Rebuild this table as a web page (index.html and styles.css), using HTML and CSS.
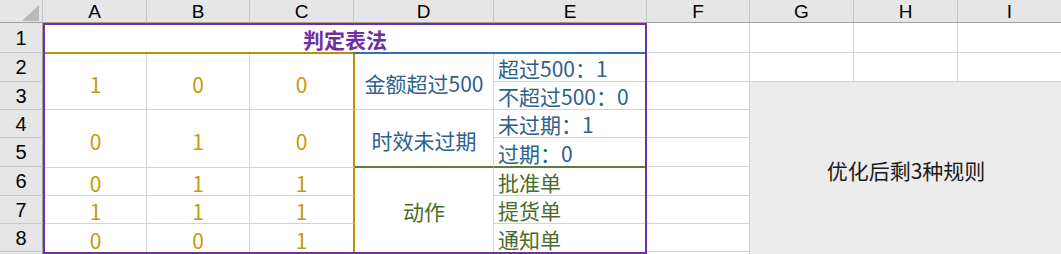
FILE: index.html
```html
<!DOCTYPE html>
<html lang="zh-CN">
<head>
<meta charset="utf-8">
<title>判定表法</title>
<link rel="stylesheet" href="styles.css">
</head>
<body>
<div class="sheet">
  <div class="corner"><svg width="43" height="23" viewBox="0 0 43 23"><polygon points="39,5 39,21 22,21" fill="#b9b9b9"/></svg></div>
  <div class="colh">A</div>
  <div class="colh">B</div>
  <div class="colh">C</div>
  <div class="colh">D</div>
  <div class="colh">E</div>
  <div class="colh">F</div>
  <div class="colh">G</div>
  <div class="colh">H</div>
  <div class="colh">I</div>

  <div class="rowh r1">1</div>
  <div class="rowh r2">2</div>
  <div class="rowh r3">3</div>
  <div class="rowh r4">4</div>
  <div class="rowh r5">5</div>
  <div class="rowh r6">6</div>
  <div class="rowh r7">7</div>
  <div class="rowh r8">8</div>
  <div class="rowh r9"></div>

  <div class="table">
    <div class="title">判定表法</div>

    <div class="cell num m2">1</div>
    <div class="cell num m2">0</div>
    <div class="cell num m2 gold">0</div>
    <div class="cell cond m2">金额超过500</div>
    <div class="cell val">超过500：1</div>
    <div class="cell val">不超过500：0</div>

    <div class="cell num m2">0</div>
    <div class="cell num m2">1</div>
    <div class="cell num m2 gold">0</div>
    <div class="cell cond m2 green">时效未过期</div>
    <div class="cell val">未过期：1</div>
    <div class="cell val green">过期：0</div>

    <div class="cell num one">0</div>
    <div class="cell num one">1</div>
    <div class="cell num one gold">1</div>
    <div class="cell act m3">动作</div>
    <div class="cell aval">批准单</div>

    <div class="cell num one">1</div>
    <div class="cell num one">1</div>
    <div class="cell num one gold">1</div>
    <div class="cell aval">提货单</div>

    <div class="cell num one last">0</div>
    <div class="cell num one last">0</div>
    <div class="cell num one last gold">1</div>
    <div class="cell aval last">通知单</div>
  </div>

  <div class="gc f1"></div><div class="gc g1"></div><div class="gc h1"></div><div class="gc i1"></div>
  <div class="gc f2"></div><div class="gc g2"></div><div class="gc h2"></div><div class="gc i2"></div>
  <div class="gc f3"></div><div class="gc f4"></div><div class="gc f5"></div>
  <div class="gc f6"></div><div class="gc f7"></div><div class="gc f8"></div><div class="gc f9"></div>

  <div class="note">优化后剩3种规则</div>
</div>
</body>
</html>
```

FILE: styles.css
```css
html, body {
  margin: 0;
  padding: 0;
  background: #ffffff;
  overflow: hidden;
}

.sheet {
  position: relative;
  display: grid;
  grid-template-columns: 43px 104px 103px 104px 140px 153px 103px 104px 104px 104px;
  grid-template-rows: 23px 30px 29px 28px 28px 29px 29px 28px 28px 2px;
  width: 1062px;
  height: 254px;
  overflow: hidden;
  font-family: "Noto Sans CJK SC", "Noto Sans", sans-serif;
  font-size: 21px;
  color: #000;
}

.corner {
  grid-column: 1;
  grid-row: 1;
  background: #e6e6e6;
  border-right: 1px solid #c6c6c6;
  border-bottom: 1px solid #9f9f9f;
  box-sizing: border-box;
}
.corner svg { display: block; }

.colh {
  grid-row: 1;
  background: #e6e6e6;
  border-right: 1px solid #c6c6c6;
  border-bottom: 1px solid #9f9f9f;
  box-sizing: border-box;
  display: flex;
  align-items: center;
  justify-content: center;
  font-family: "Liberation Sans", "Noto Sans", sans-serif;
  line-height: 21px;
  font-size: 19px;
}

.rowh {
  grid-column: 1;
  background: #e6e6e6;
  border-right: 1px solid #9f9f9f;
  border-bottom: 1px solid #c6c6c6;
  box-sizing: border-box;
  display: flex;
  align-items: center;
  justify-content: center;
  font-family: "Liberation Sans", "Noto Sans", sans-serif;
  font-size: 20px;
  line-height: 22px;
}
.r1 { grid-row: 2; }
.r2 { grid-row: 3; }
.r3 { grid-row: 4; }
.r4 { grid-row: 5; }
.r5 { grid-row: 6; }
.r6 { grid-row: 7; }
.r7 { grid-row: 8; }
.r8 { grid-row: 9; }
.r9 { grid-row: 10; border-bottom: none; }

.gc {
  border-right: 1px solid #d4d4d4;
  border-bottom: 1px solid #d4d4d4;
  box-sizing: border-box;
}
.f1, .f2, .f3, .f4, .f5, .f6, .f7, .f8, .f9 { grid-column: 7; }
.g1, .g2 { grid-column: 8; }
.h1, .h2 { grid-column: 9; }
.i1, .i2 { grid-column: 10; }
.f1, .g1, .h1, .i1 { grid-row: 2; }
.f2, .g2, .h2, .i2 { grid-row: 3; }
.f3 { grid-row: 4; }
.f4 { grid-row: 5; }
.f5 { grid-row: 6; }
.f6 { grid-row: 7; }
.f7 { grid-row: 8; }
.f8 { grid-row: 9; }
.f9 { grid-row: 10; border-bottom: none; }

/* decision table block A1:E8 */
.table {
  grid-column: 2 / 7;
  grid-row: 2 / 11;
  align-self: start;
  height: 231px;
  box-sizing: border-box;
  border: 2px solid #7030a0;
  display: grid;
  grid-template-columns: 102px 103px 105px 139px 151px;
  grid-template-rows: 29px 28px 28px 28px 30px 28px 28px 28px;
  position: relative;
  z-index: 1;
  background: #fff;
}

.title {
  grid-column: 1 / 6;
  display: flex;
  align-items: center;
  justify-content: center;
  padding-bottom: 2px;
  box-sizing: border-box;
  color: #7030a0;
  font-weight: bold;
  font-size: 21px;
  line-height: 24px;
  background:
    linear-gradient(to right, #bf9000 0, #bf9000 308px, #2e75b6 308px, #2e75b6 100%) left bottom / 100% 2px no-repeat;
}

.cell {
  box-sizing: border-box;
  border-right: 1px solid #d4d4d4;
  border-bottom: 1px solid #d4d4d4;
  display: flex;
  line-height: 24px;
  font-size: 21px;
}
.m2 { grid-row: span 2; }
.m3 { grid-row: span 3; }
.gold { border-right: 2px solid #bf9000; }
.green { border-bottom: 2px solid #548235; }
.last { border-bottom: none; }

.num {
  color: #c59a0a;
  justify-content: center;
  align-items: center;
}
.num.m2 { padding-top: 4px; }
.num.one { padding-top: 3px; }

.cond {
  color: #2e5f8d;
  justify-content: center;
  align-items: center;
  padding-top: 3px;
}

.val {
  color: #2e5f8d;
  border-right: none;
  align-items: flex-end;
  padding-left: 4px;
  padding-bottom: 1px;
}

.act {
  color: #4b6b2c;
  justify-content: center;
  align-items: center;
  border-bottom: none;
  padding-top: 2px;
}

.aval {
  color: #4b6b2c;
  border-right: none;
  align-items: flex-end;
  padding-left: 4px;
  padding-bottom: 1px;
}

/* floating text box over G3:I8 */
.note {
  position: absolute;
  left: 750px;
  top: 82px;
  width: 312px;
  height: 172px;
  box-sizing: border-box;
  padding-top: 4px;
  background: #ececec;
  display: flex;
  align-items: center;
  justify-content: center;
  color: #1a1a1a;
  font-size: 21px;
  z-index: 2;
}
```
